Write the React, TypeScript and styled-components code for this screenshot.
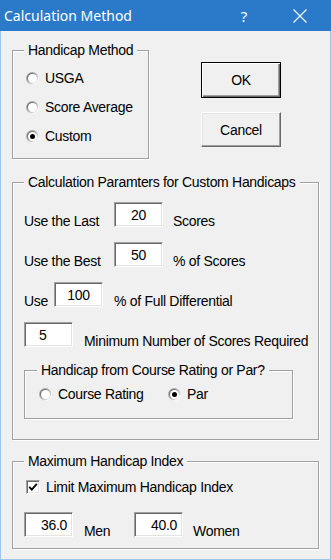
import React, { useId } from 'react';
import styled, { createGlobalStyle } from 'styled-components';

const GlobalStyle = createGlobalStyle`
  html, body {
    margin: 0;
    padding: 0;
    background: #f0f0f0;
  }
  body {
    font-family: "Liberation Sans", Arial, sans-serif;
  }
`;

const Window = styled.div`
  width: 331px;
  height: 560px;
  display: flex;
  flex-direction: column;
  background: #f0f0f0;
`;

const TitleBar = styled.div`
  flex: none;
  height: 31px;
  display: flex;
  align-items: center;
  background: #2b79c9;
  color: #fff;
  font-family: "Noto Sans", "Open Sans", sans-serif;
  font-size: 14px;
  line-height: 16px;
`;

const Caption = styled.div`
  flex: 1;
  padding: 1px 0 0 4px;
`;

const CaptionButton = styled.div<{ $w: number }>`
  width: ${p => p.$w}px;
  height: 31px;
  display: flex;
  align-items: center;
  justify-content: center;
  font-size: 15px;
`;

const Body = styled.div`
  flex: 1;
  display: flex;
  flex-direction: column;
  align-items: flex-start;
  padding: 11px 0 0 11px;
  border: 1px solid #9ec6ea;
  border-top: none;
  color: #000;
  font-size: 14px;
  line-height: 16px;
  letter-spacing: -0.3px;
`;

const TopRow = styled.div`
  display: flex;
  align-items: flex-start;
`;

const Frame = styled.fieldset<{ $w: number; $pad: string; $mt?: number }>`
  box-sizing: border-box;
  width: ${p => p.$w}px;
  min-width: 0;
  margin: ${p => p.$mt ?? 0}px 0 0 0;
  padding: ${p => p.$pad};
  border: 1px solid #a0a0a0;
  box-shadow: 1px 1px 0 #fff, inset 1px 1px 0 #fff;
`;

const Legend = styled.legend`
  padding: 0 4px;
  margin: 0;
  background: #f0f0f0;
  line-height: 16px;
`;

const Stack = styled.div<{ $gap: number }>`
  display: flex;
  flex-direction: column;
  align-items: flex-start;
  gap: ${p => p.$gap}px;
`;

const OptionRow = styled.div`
  display: flex;
  align-items: center;
  padding-left: 2px;
`;

const Option = styled.div<{ $w?: number }>`
  display: flex;
  align-items: center;
  gap: 6px;
  height: 16px;
  width: ${p => (p.$w ? `${p.$w}px` : 'auto')};
`;

const ButtonColumn = styled.div`
  display: flex;
  flex-direction: column;
  gap: 14px;
  margin: 20px 0 0 52px;
`;

const Button = styled.div<{ $default?: boolean }>`
  box-sizing: border-box;
  width: 80px;
  height: ${p => (p.$default ? 36 : 35)}px;
  display: flex;
  align-items: center;
  justify-content: center;
  background: #f0f0f0;
  border: 1px solid;
  border-color: ${p => (p.$default ? '#000' : '#fff #696969 #696969 #fff')};
  box-shadow: ${p =>
    p.$default
      ? 'inset 1px 1px 0 #fff, inset -1px -1px 0 #696969, inset -2px -2px 0 #a0a0a0'
      : 'inset -1px -1px 0 #a0a0a0, inset 1px 1px 0 #e3e3e3'};
`;

const FieldRow = styled.div<{ $mt?: number }>`
  display: flex;
  align-items: flex-end;
  height: 25px;
  margin-top: ${p => p.$mt ?? 0}px;
`;

const Label = styled.span<{ $w?: number; $ml?: number }>`
  display: block;
  width: ${p => (p.$w ? `${p.$w}px` : 'auto')};
  margin: 0 0 -2px ${p => p.$ml ?? 0}px;
  white-space: nowrap;
`;

const TextBox = styled.div<{ $align: 'left' | 'center' | 'right'; $inset?: number }>`
  box-sizing: border-box;
  width: 49px;
  height: 25px;
  padding: 4px ${p => (p.$align === 'right' ? p.$inset ?? 0 : 0)}px 0
    ${p => (p.$align === 'left' ? p.$inset ?? 0 : 0)}px;
  background: #fff;
  border: 1px solid;
  border-color: #a0a0a0 #fff #fff #a0a0a0;
  box-shadow: inset 1px 1px 0 #696969, inset -1px -1px 0 #e3e3e3;
  text-align: ${p => p.$align};
  line-height: 16px;
`;

const CheckBox = styled.div`
  box-sizing: border-box;
  width: 14px;
  height: 14px;
  margin-left: 2px;
  background: #fff;
  border: 1px solid;
  border-color: #a0a0a0 #fff #fff #a0a0a0;
  box-shadow: inset 1px 1px 0 #696969, inset -1px -1px 0 #e3e3e3;
  display: flex;
  align-items: center;
  justify-content: center;
`;

const Radio = ({ checked }: { checked?: boolean }) => {
  const id = useId().replace(/:/g, '');
  return (
    <svg width="13" height="13" viewBox="0 0 13 13" style={{ flex: 'none' }}>
      <defs>
        <linearGradient id={`o${id}`} x1="0" y1="0" x2="1" y2="1">
          <stop offset="0.2" stopColor="#a0a0a0" />
          <stop offset="0.8" stopColor="#ffffff" />
        </linearGradient>
        <linearGradient id={`i${id}`} x1="0" y1="0" x2="1" y2="1">
          <stop offset="0.2" stopColor="#696969" />
          <stop offset="0.8" stopColor="#e3e3e3" />
        </linearGradient>
      </defs>
      <circle cx="6.5" cy="6.5" r="6.5" fill={`url(#o${id})`} />
      <circle cx="6.5" cy="6.5" r="5.5" fill={`url(#i${id})`} />
      <circle cx="6.5" cy="6.5" r="4.5" fill="#fff" />
      {checked && <circle cx="6.5" cy="6.5" r="2.5" fill="#000" />}
    </svg>
  );
};

const RadioOption = ({ label, checked, w }: { label: string; checked?: boolean; w?: number }) => (
  <Option $w={w}>
    <Radio checked={checked} />
    <span>{label}</span>
  </Option>
);

export default function App() {
  return (
    <Window>
      <GlobalStyle />
      <TitleBar>
        <Caption>Calculation Method</Caption>
        <CaptionButton $w={50}>?</CaptionButton>
        <CaptionButton $w={62}>
          <svg width="14" height="14" viewBox="0 0 14 14">
            <path d="M0.5 0.5 L13.5 13.5 M13.5 0.5 L0.5 13.5" stroke="#fff" strokeWidth="1.1" />
          </svg>
        </CaptionButton>
      </TitleBar>
      <Body>
        <TopRow>
          <Frame $w={137} $pad="12px 0 14px 11px">
            <Legend>Handicap Method</Legend>
            <Stack $gap={13}>
              <OptionRow>
                <RadioOption label="USGA" />
              </OptionRow>
              <OptionRow>
                <RadioOption label="Score Average" />
              </OptionRow>
              <OptionRow>
                <RadioOption label="Custom" checked />
              </OptionRow>
            </Stack>
          </Frame>
          <ButtonColumn>
            <Button $default>OK</Button>
            <Button>Cancel</Button>
          </ButtonColumn>
        </TopRow>

        <Frame $w={307} $pad="12px 0 20px 11px" $mt={15}>
          <Legend>Calculation Paramters for Custom Handicaps</Legend>
          <Stack $gap={15}>
            <FieldRow>
              <Label $w={90}>Use the Last</Label>
              <TextBox $align="center">20</TextBox>
              <Label $ml={10}>Scores</Label>
            </FieldRow>
            <FieldRow>
              <Label $w={90}>Use the Best</Label>
              <TextBox $align="center">50</TextBox>
              <Label $ml={10}>% of Scores</Label>
            </FieldRow>
            <FieldRow>
              <Label $w={30}>Use</Label>
              <TextBox $align="center">100</TextBox>
              <Label $ml={11}>% of Full Differential</Label>
            </FieldRow>
            <FieldRow>
              <TextBox $align="left" $inset={14}>5</TextBox>
              <Label $ml={11}>Minimum Number of Scores Required</Label>
            </FieldRow>
            <Frame $w={269} $pad="8px 0 16px 12px">
              <Legend>Handicap from Course Rating or Par?</Legend>
              <OptionRow>
                <RadioOption label="Course Rating" w={129} />
                <RadioOption label="Par" checked />
              </OptionRow>
            </Frame>
          </Stack>
        </Frame>

        <Frame $w={307} $pad="10px 0 11px 11px" $mt={13}>
          <Legend>Maximum Handicap Index</Legend>
          <Option>
            <CheckBox>
              <svg width="10" height="10" viewBox="0 0 10 10">
                <path d="M1.2 4.8 L3.8 7.6 L8.8 1.8" fill="none" stroke="#000" strokeWidth="1.8" />
              </svg>
            </CheckBox>
            <span>Limit Maximum Handicap Index</span>
          </Option>
          <FieldRow $mt={17}>
            <TextBox $align="right" $inset={5}>36.0</TextBox>
            <Label $w={50} $ml={11}>Men</Label>
            <TextBox $align="right" $inset={5}>40.0</TextBox>
            <Label $ml={10}>Women</Label>
          </FieldRow>
        </Frame>
      </Body>
    </Window>
  );
}
